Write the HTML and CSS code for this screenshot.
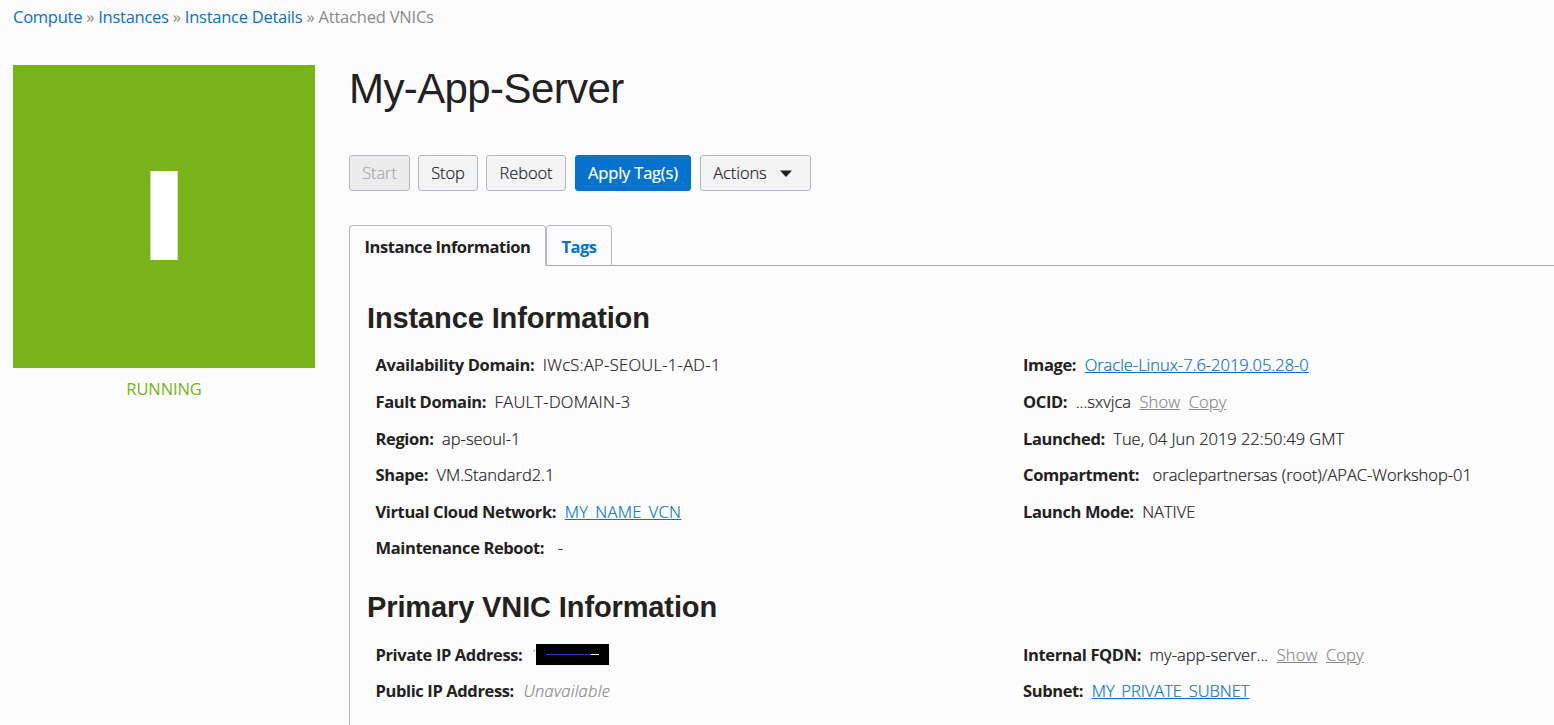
FILE: index.html
```
<!DOCTYPE html>
<html lang="en">
<head>
<meta charset="utf-8">
<title>My-App-Server</title>
<link rel="stylesheet" href="styles.css">
</head>
<body>
<nav class="crumbs"><a>Compute</a> » <a>Instances</a> » <a>Instance Details</a> » <span>Attached VNICs</span></nav>
<div class="page">
  <aside class="side">
    <div class="tile">I</div>
    <div class="state">RUNNING</div>
  </aside>
  <main class="main">
    <h1 class="title">My-App-Server</h1>
    <div class="buttons">
      <button class="btn start" disabled>Start</button>
      <button class="btn stop">Stop</button>
      <button class="btn reboot">Reboot</button>
      <button class="btn primary">Apply Tag(s)</button>
      <button class="btn actions">Actions<svg width="12" height="7" viewBox="0 0 12 7"><path d="M0 0.5h12L6 7z" fill="#222"/></svg></button>
    </div>
    <div class="tabs">
      <div class="tab active">Instance Information</div>
      <div class="tab other">Tags</div>
      <div class="rest"></div>
    </div>
    <section class="panel">
      <h2 class="heading">Instance Information</h2>
      <div class="cols">
        <dl class="list">
          <div class="row"><dt>Availability Domain:</dt><dd class="caps">IWcS:AP-SEOUL-1-AD-1</dd></div>
          <div class="row"><dt>Fault Domain:</dt><dd class="caps">FAULT-DOMAIN-3</dd></div>
          <div class="row"><dt>Region:</dt><dd>ap-seoul-1</dd></div>
          <div class="row"><dt>Shape:</dt><dd>VM.Standard2.1</dd></div>
          <div class="row"><dt>Virtual Cloud Network:</dt><dd class="caps"><a class="link">MY_NAME_VCN</a></dd></div>
          <div class="row"><dt>Maintenance Reboot:</dt><dd class="inset">-</dd></div>
        </dl>
        <dl class="list">
          <div class="row"><dt>Image:</dt><dd><a class="link">Oracle-Linux-7.6-2019.05.28-0</a></dd></div>
          <div class="row"><dt>OCID:</dt><dd>...sxvjca</dd><a class="minor">Show</a><a class="minor">Copy</a></div>
          <div class="row"><dt>Launched:</dt><dd>Tue, 04 Jun 2019 22:50:49 GMT</dd></div>
          <div class="row"><dt>Compartment:</dt><dd class="inset">oraclepartnersas (root)/APAC-Workshop-01</dd></div>
          <div class="row"><dt>Launch Mode:</dt><dd>NATIVE</dd></div>
        </dl>
      </div>
      <h2 class="heading second">Primary VNIC Information</h2>
      <div class="cols">
        <dl class="list">
          <div class="row"><dt>Private IP Address:</dt><dd class="masked"><svg width="78" height="21" viewBox="0 0 78 21"><path d="M2.5 7.5L4 6" stroke="#777" fill="none"/><path d="M5 0h73v21H5z"/><path d="M15 10.5h45" stroke="#3434d0"/><path d="M60 10.5h8" stroke="#fff"/></svg></dd></div>
          <div class="row"><dt>Public IP Address:</dt><dd class="none">Unavailable</dd></div>
        </dl>
        <dl class="list">
          <div class="row"><dt>Internal FQDN:</dt><dd>my-app-server...</dd><a class="minor">Show</a><a class="minor">Copy</a></div>
          <div class="row"><dt>Subnet:</dt><dd><a class="link">MY_PRIVATE_SUBNET</a></dd></div>
        </dl>
      </div>
    </section>
  </main>
</div>
</body>
</html>
```
FILE: styles.css
```
* { box-sizing: border-box; }
body { margin: 0; height: 725px; overflow: hidden; background: #fcfcfc; color: #222; font: 300 16.5px/24px "Open Sans", "Noto Sans", sans-serif; letter-spacing: -0.3px; }
.crumbs { height: 65px; padding: 5px 13px 0; color: #8a8a8a; font-weight: 400; letter-spacing: -0.21px; white-space: nowrap; }
.crumbs a { color: #0572ce; letter-spacing: -0.26px; }
.page { display: flex; padding-left: 13px; }
.side { width: 302px; flex: none; margin-right: 34px; }
.tile { height: 303px; padding-bottom: 10px; display: flex; align-items: center; justify-content: center; background: #77b319; color: #fff; font-size: 119.6px; font-weight: 800; line-height: 1; letter-spacing: 0; -webkit-text-stroke: 4px #fff; }
.state { padding-top: 9px; text-align: center; color: #77b319; font-weight: 400; letter-spacing: -0.1px; }
.main { flex: 1; min-width: 0; }
.title { margin: 0; height: 90px; font: 400 42px/48px "Liberation Sans", Arial, sans-serif; letter-spacing: -0.6px; }
.buttons { display: flex; height: 70px; }
.btn { height: 36px; padding: 0; border: 1px solid #b3b9c8; border-radius: 3px; background: #f4f4f4; color: #222; font: inherit; letter-spacing: -0.1px; display: flex; align-items: center; justify-content: center; margin-right: 8px; -webkit-text-stroke: 0.2px; }
.start { width: 61px; background: #ececec; color: #aaa; }
.stop { width: 60px; }
.reboot { width: 80px; margin-right: 9px; }
.primary { width: 116px; margin-right: 9px; background: #0572ce; border-color: #0572ce; color: #fff; font-weight: 400; letter-spacing: -0.2px; }
.actions { width: 111px; gap: 13px; padding-right: 6px; }
.tabs { display: flex; height: 41px; font-weight: 700; line-height: 42px; letter-spacing: -0.45px; }
.tab { border: 1px solid #b3b9c8; border-radius: 4px 4px 0 0; text-align: center; }
.active { width: 197px; border-bottom: 0; }
.other { width: 66px; border-bottom-color: #a5a8b0; color: #0572ce; }
.rest { flex: 1; border-bottom: 1px solid #a5a8b0; }
.panel { height: 459px; border-left: 1px solid #b3b9c8; padding: 34px 0 0 17px; }
.heading { margin: 0; height: 47.4px; font: 700 29px/36px "Liberation Sans", Arial, sans-serif; letter-spacing: -0.12px; }
.second { margin-top: 21.6px; height: 48px; }
.cols { display: grid; grid-template-columns: 647.5px 1fr; padding-left: 8.5px; }
.list { margin: 0; }
.row { display: flex; height: 36.6px; gap: 8.5px; line-height: 36.6px; white-space: nowrap; }
dt { font-weight: 700; letter-spacing: -0.38px; }
dd { margin: 0; letter-spacing: -0.03px; -webkit-text-stroke: 0.2px; }
.caps { letter-spacing: 0.3px; }
.inset { padding-left: 5px; }
.link { color: #0572ce; text-decoration: underline; }
.minor { color: #8a8a8a; text-decoration: underline; letter-spacing: 0.1px; -webkit-text-stroke: 0.2px; }
.none { color: #888; font-style: italic; letter-spacing: 0.25px; padding-left: 1px; }
.masked svg { display: block; margin: 7px 0 0; }
```
